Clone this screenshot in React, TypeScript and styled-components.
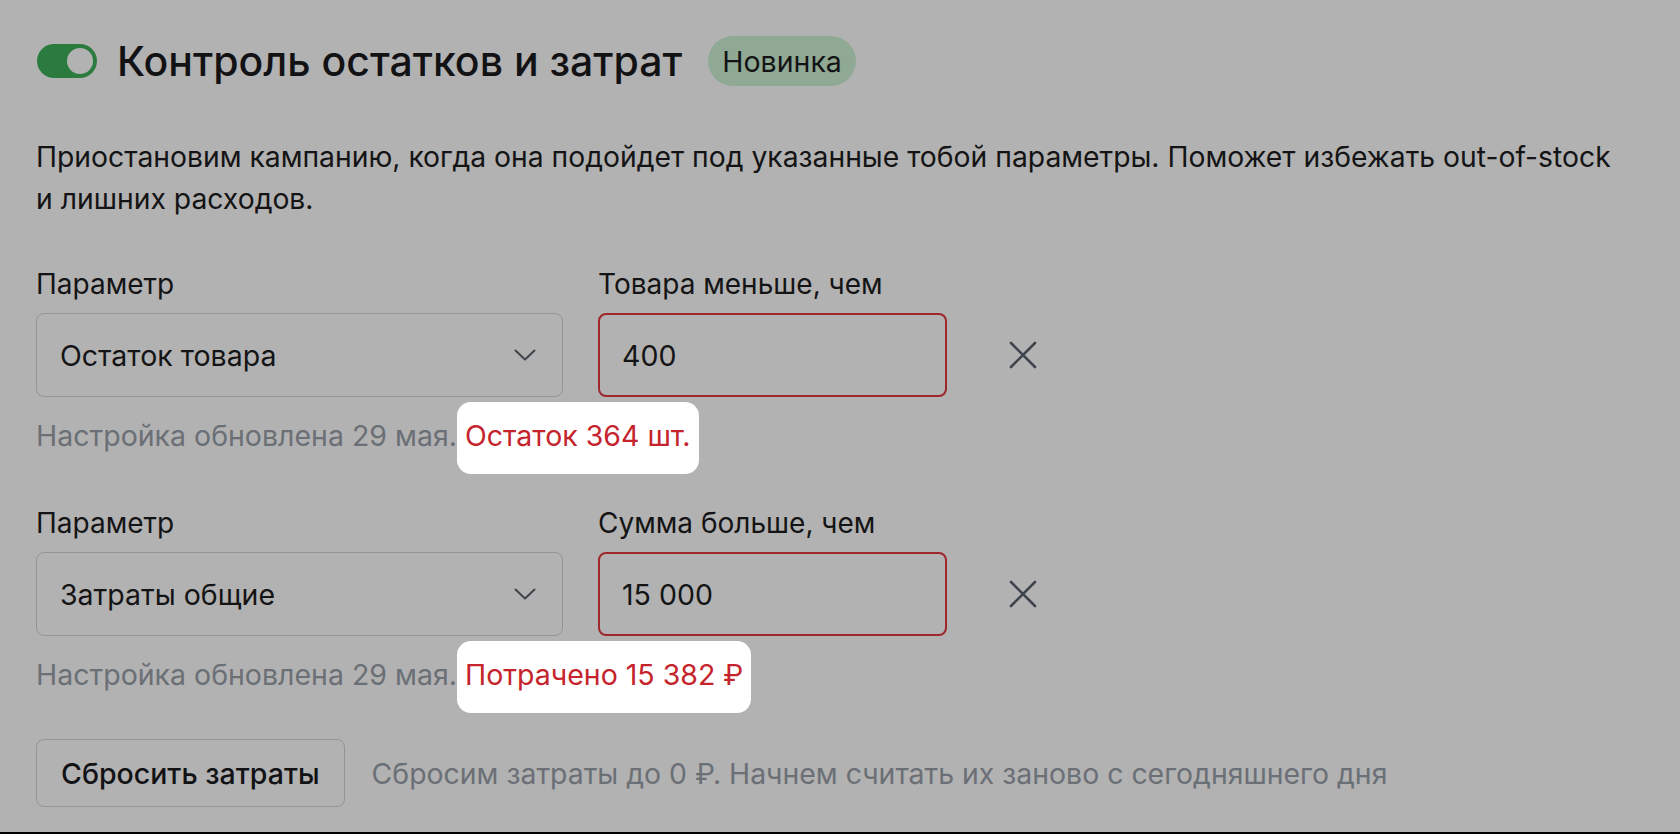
import React from "react";
import styled, { createGlobalStyle } from "styled-components";

const GlobalStyle = createGlobalStyle`
  html, body { margin: 0; padding: 0; background: #ffffff; }
  body { font-family: Inter, Roboto, "Noto Sans", "Liberation Sans", sans-serif; color: #1d1d21; }
  * { box-sizing: border-box; }
`;

const Page = styled.div`
  position: relative;
  height: 100vh;
  padding: 36px 0 0 36px;
  border-bottom: 2px solid #000;
  overflow: hidden;
`;

const Dim = styled.div`
  position: fixed;
  inset: 0;
  background: rgba(0, 0, 0, 0.3);
  z-index: 1;
  pointer-events: none;
`;

const TitleRow = styled.div`
  display: flex;
  align-items: center;
  height: 50px;
`;

const Toggle = styled.div`
  width: 60px;
  height: 34px;
  margin-left: 1px;
  border-radius: 17px;
  background: #3fb15a;
  display: flex;
  align-items: center;
  justify-content: flex-end;
  padding: 0 4px;
`;

const Knob = styled.span`
  width: 26px;
  height: 26px;
  border-radius: 50%;
  background: #ffffff;
`;

const Title = styled.h1`
  margin: 0 0 0 20px;
  font-size: 41px;
  line-height: 48px;
  font-weight: 500;
  color: #1b1b1f;
`;

const Badge = styled.span`
  margin-left: 26px;
  height: 50px;
  padding: 0 14px;
  border-radius: 25px;
  background: #cdf3d5;
  display: inline-flex;
  align-items: center;
  font-size: 28.5px;
  color: #1d1d21;
`;

const Description = styled.p`
  margin: 50px 0 0 0;
  max-width: 1590px;
  font-size: 28.3px;
  line-height: 42px;
  color: #1d1d21;
`;

const Rule = styled.section<{ $first?: boolean }>`
  margin-top: ${(p) => (p.$first ? "48px" : "55px")};
`;

const FieldsGrid = styled.div`
  display: grid;
  grid-template-columns: 527px 349px 48px;
  column-gap: 35px;
  row-gap: 13px;
  align-items: center;
`;

const Label = styled.label<{ $wide?: boolean }>`
  font-size: 28px;
  line-height: 32px;
  color: #1d1d21;
  ${(p) => (p.$wide ? "grid-column: 2 / span 2;" : "")}
`;

const SelectBox = styled.div`
  height: 84px;
  border: 1.5px solid #d3d5d9;
  border-radius: 8px;
  display: flex;
  align-items: center;
  justify-content: space-between;
  padding: 0 26px 0 23px;
  font-size: 28.5px;
  color: #1d1d21;
`;

const ValueInput = styled.div`
  height: 84px;
  border: 2px solid #e3393f;
  border-radius: 8px;
  display: flex;
  align-items: center;
  padding: 0 22px;
  font-size: 28.5px;
  color: #1d1d21;
`;

const RemoveButton = styled.button`
  width: 48px;
  height: 48px;
  margin-left: 17px;
  padding: 0;
  border: none;
  background: transparent;
  display: flex;
  align-items: center;
  justify-content: center;
  color: #5a626e;
`;

const Helper = styled.p`
  margin: 23px 0 0 0;
  font-size: 28.5px;
  line-height: 32px;
  color: #9aa0a9;
`;

const Highlight = styled.span`
  position: relative;
  z-index: 2;
  color: #c5242c;
  &::before {
    content: "";
    position: absolute;
    left: -8px;
    right: -8px;
    top: -16px;
    bottom: -21px;
    background: #ffffff;
    border-radius: 14px;
    z-index: -1;
  }
`;

const Footer = styled.div`
  margin-top: 48px;
  display: flex;
  align-items: center;
`;

const ResetButton = styled.button`
  height: 68px;
  padding: 0 24px;
  border: 1.5px solid #d3d5d9;
  border-radius: 8px;
  background: #ffffff;
  font-family: inherit;
  font-size: 28.5px;
  font-weight: 500;
  color: #1b1b1f;
`;

const Hint = styled.span`
  margin-left: 27px;
  font-size: 28.4px;
  color: #9aa0a9;
`;

const Chevron = () => (
  <svg width="22" height="12" viewBox="0 0 22 12" fill="none">
    <path d="M1.5 1.5 L11 10.5 L20.5 1.5" stroke="#5a626e" strokeWidth="2" strokeLinecap="round" strokeLinejoin="round" />
  </svg>
);

const CrossIcon = () => (
  <svg width="28" height="28" viewBox="0 0 28 28" fill="none">
    <path d="M2 2 L26 26 M26 2 L2 26" stroke="currentColor" strokeWidth="2.6" strokeLinecap="round" />
  </svg>
);

type RuleData = {
  param: string;
  label: string;
  value: string;
  status: string;
};

const rules: RuleData[] = [
  { param: "Остаток товара", label: "Товара меньше, чем", value: "400", status: "Остаток 364 шт." },
  { param: "Затраты общие", label: "Сумма больше, чем", value: "15 000", status: "Потрачено 15 382 ₽" },
];

export default function App() {
  return (
    <>
      <GlobalStyle />
      <Page>
        <TitleRow>
          <Toggle>
            <Knob />
          </Toggle>
          <Title>Контроль остатков и затрат</Title>
          <Badge>Новинка</Badge>
        </TitleRow>
        <Description>
          Приостановим кампанию, когда она подойдет под указанные тобой параметры. Поможет избежать out-of-stock и
          лишних расходов.
        </Description>
        {rules.map((r, i) => (
          <Rule key={r.param} $first={i === 0}>
            <FieldsGrid>
              <Label>Параметр</Label>
              <Label $wide>{r.label}</Label>
              <SelectBox>
                <span>{r.param}</span>
                <Chevron />
              </SelectBox>
              <ValueInput>{r.value}</ValueInput>
              <RemoveButton aria-label="Удалить">
                <CrossIcon />
              </RemoveButton>
            </FieldsGrid>
            <Helper>
              Настройка обновлена 29 мая. <Highlight>{r.status}</Highlight>
            </Helper>
          </Rule>
        ))}
        <Footer>
          <ResetButton>Сбросить затраты</ResetButton>
          <Hint>Сбросим затраты до 0 ₽. Начнем считать их заново с сегодняшнего дня</Hint>
        </Footer>
        <Dim />
      </Page>
    </>
  );
}
